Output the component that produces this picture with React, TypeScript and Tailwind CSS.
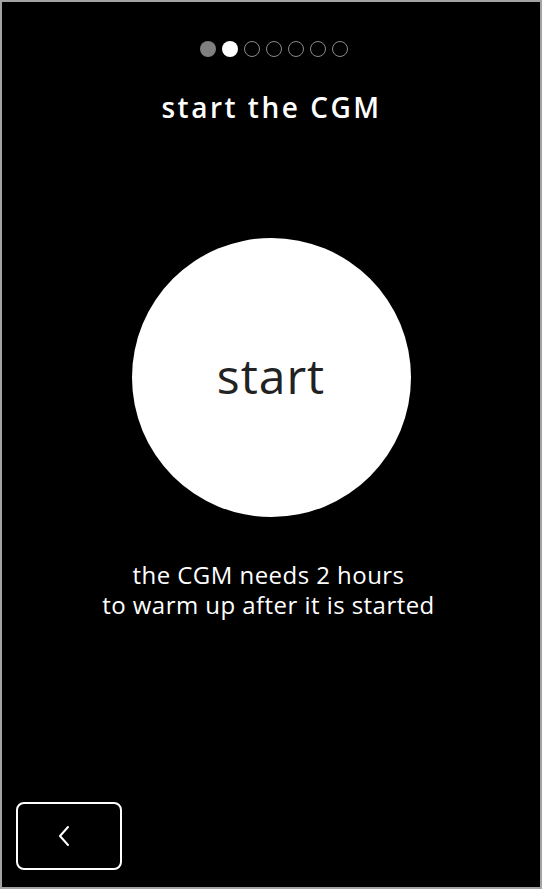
import { useState } from "react";

const STEPS = 7;
const CURRENT = 1;

function StepDots() {
  return (
    <div className="flex items-center gap-[6px]">
      {Array.from({ length: STEPS }).map((_, i) => (
        <span
          key={i}
          className={
            i < CURRENT
              ? "w-4 h-4 rounded-full bg-[#808080]"
              : i === CURRENT
              ? "w-4 h-4 rounded-full bg-white"
              : "w-4 h-4 rounded-full border-[1.5px] border-[#8a8a8a]"
          }
        />
      ))}
    </div>
  );
}

export default function App() {
  const [started, setStarted] = useState(false);

  return (
    <div
      className="w-[542px] h-[889px] bg-black border-2 border-[#a3a3a3] flex flex-col items-center text-white"
      style={{ fontFamily: '"Open Sans", "Noto Sans", sans-serif' }}
    >
      <div className="mt-[39px] ml-[6px]">
        <StepDots />
      </div>

      <h1 className="mt-[32px] text-[28px] leading-9 font-semibold tracking-[2.5px] ml-[1px]">start the CGM</h1>

      <button
        onClick={() => setStarted(!started)}
        className="mt-[113px] w-[279px] h-[279px] rounded-full bg-white flex items-center justify-center"
      >
        <span className="text-[48px] leading-none text-[#222] tracking-[1px] -mt-1">start</span>
      </button>

      <p className="mt-[43px] mr-[5px] text-[24px] leading-[30px] tracking-[0.45px] text-center">
        the CGM needs 2 hours
        <br />
        to warm up after it is started
      </p>

      <div className="mt-auto mb-[17px] self-start ml-[14px]">
        <button className="w-[106px] h-[68px] rounded-lg border-2 border-white flex items-center justify-center">
          <svg className="mr-[10px]" width="12" height="22" viewBox="0 0 12 22" fill="none">
            <path d="M10 2 L2 11 L10 20" stroke="white" strokeWidth="2" strokeLinecap="round" strokeLinejoin="round" />
          </svg>
        </button>
      </div>
    </div>
  );
}
